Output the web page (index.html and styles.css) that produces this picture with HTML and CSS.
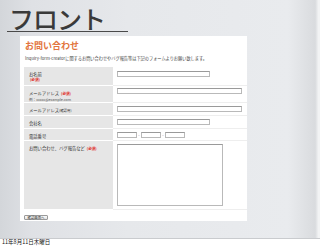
FILE: index.html
```html
<!DOCTYPE html>
<html lang="ja">
<head>
<meta charset="utf-8">
<link rel="stylesheet" href="styles.css">
</head>
<body>
<div class="slide">
  <div class="title-wrap"><h1 class="title">フロント</h1></div>
  <div class="panel">
    <h2 class="heading">お問い合わせ</h2>
    <p class="desc">Inquiry-form-creatorに関するお問い合わせやバグ報告等は下記のフォームよりお願い致します。</p>
    <div class="form">
      <div class="label r1"><div>お名前</div><div class="req">(必須)</div></div>
      <div class="field r1"><span class="input w-md"></span></div>
      <div class="label r2"><div>メールアドレス <span class="req">(必須)</span></div><div class="note">例：xxxxx@example.com</div></div>
      <div class="field r2"><span class="input w-lg"></span></div>
      <div class="label r3"><div>メールアドレス<span class="small">(確認用)</span></div></div>
      <div class="field r3"><span class="input w-lg"></span></div>
      <div class="label r4"><div>会社名</div></div>
      <div class="field r4"><span class="input w-md"></span></div>
      <div class="label r5"><div>電話番号</div></div>
      <div class="field r5 tel"><span class="input w-sm"></span><span class="dash">-</span><span class="input w-sm"></span><span class="dash">-</span><span class="input w-sm"></span></div>
      <div class="label r6"><div>お問い合わせ、バグ報告など <span class="req">(必須)</span></div></div>
      <div class="field r6"><span class="textarea"></span></div>
    </div>
    <div class="actions"><span class="button">確認画面へ</span></div>
  </div>
</div>
<div class="footer">11年8月11日木曜日</div>
</body>
</html>
```
FILE: styles.css
```css
html, body {
  margin: 0;
  padding: 0;
  background: #ffffff;
}
body {
  width: 320px;
  height: 246px;
  overflow: hidden;
  font-family: "Noto Sans CJK JP", "Noto Sans", sans-serif;
}
.slide {
  height: 239px;
  box-sizing: border-box;
  padding-top: 0;
  background: linear-gradient(to right, #d3d6da 0%, #dfe1e5 10%, #e6e8eb 40%, #e9ebee 90%, #d9dbde 98.5%, #f2f3f4 99.5%);
  border-bottom: 1px solid #c9cbce;
  overflow: hidden;
}
.title-wrap {
  margin-left: 7px;
  width: 121px;
  height: 31px;
  border-bottom: 1.5px solid #4a4a4a;
  display: flex;
  align-items: flex-start;
}
.title {
  margin: 0 0 0 2px;
  font-size: 25px;
  line-height: 30px;
  padding-top: 3px;
  font-weight: 500;
  color: #3a3a3a;
  letter-spacing: -1px;
}
.panel {
  margin: 4px 0 0 20px;
  width: 227px;
  height: 185px;
  box-sizing: border-box;
  background: #ffffff;
  padding: 3px 0 0 4px;
}
.heading {
  margin: 0 0 0 1px;
  font-size: 9px;
  line-height: 13px;
  font-weight: 700;
  color: #e2743d;
}
.desc {
  margin: 3px 0 0 1px;
  font-size: 4.2px;
  line-height: 6px;
  color: #444;
  white-space: nowrap;
}
.form {
  margin-top: 6px;
  display: grid;
  grid-template-columns: 89px 1fr;
  grid-template-rows: 18px 16px 12px 12px 11px 68px;
  row-gap: 1px;
  background: #ffffff;
}
.label {
  background: #e6e6e6;
  padding: 4px 0 0 5px;
  font-size: 4.3px;
  line-height: 6px;
  color: #333;
  white-space: nowrap;
}
.field {
  box-shadow: 0 1px 0 #eeeeee;
  padding: 4px 0 0 4px;
  display: flex;
  align-items: flex-start;
}
.r1.field { padding-top: 4px; }
.r2.field { padding-top: 2px; }
.r3.field { padding-top: 3px; }
.r4.field { padding-top: 3px; }
.r5.field { padding-top: 3px; }
.r6.field { padding-top: 3px; }
.req {
  color: #e0241b;
  font-size: 3.6px;
  font-weight: 700;
}
.label .req { padding-left: 1px; }
.note {
  font-size: 3.6px;
  color: #555;
}
.small { font-size: 3.4px; }
.input {
  display: block;
  height: 6px;
  box-sizing: border-box;
  border: 1px solid #b9b9b9;
  border-top-color: #9a9a9a;
  background: #ffffff;
}
.w-md { width: 93px; }
.w-lg { width: 125px; }
.w-sm { width: 20px; }
.dash {
  font-size: 4px;
  line-height: 6px;
  color: #555;
  width: 4px;
  text-align: center;
}
.textarea {
  display: block;
  width: 106px;
  height: 62px;
  box-sizing: border-box;
  border: 1px solid #b9b9b9;
  border-top-color: #9a9a9a;
  background: #ffffff;
}
.actions {
  margin-top: 6px;
  display: flex;
  line-height: 0;
  font-size: 0;
}
.button {
  display: block;
  width: 24px;
  height: 5px;
  box-sizing: border-box;
  border: 0.5px solid #9a9a9a;
  border-radius: 1px;
  background: linear-gradient(#fafafa, #e3e3e3);
  font-size: 3.4px;
  line-height: 4px;
  text-align: center;
  color: #333;
}
.footer {
  padding-left: 2px;
  font-size: 5.5px;
  line-height: 7px;
  color: #111;
  white-space: nowrap;
}
```
